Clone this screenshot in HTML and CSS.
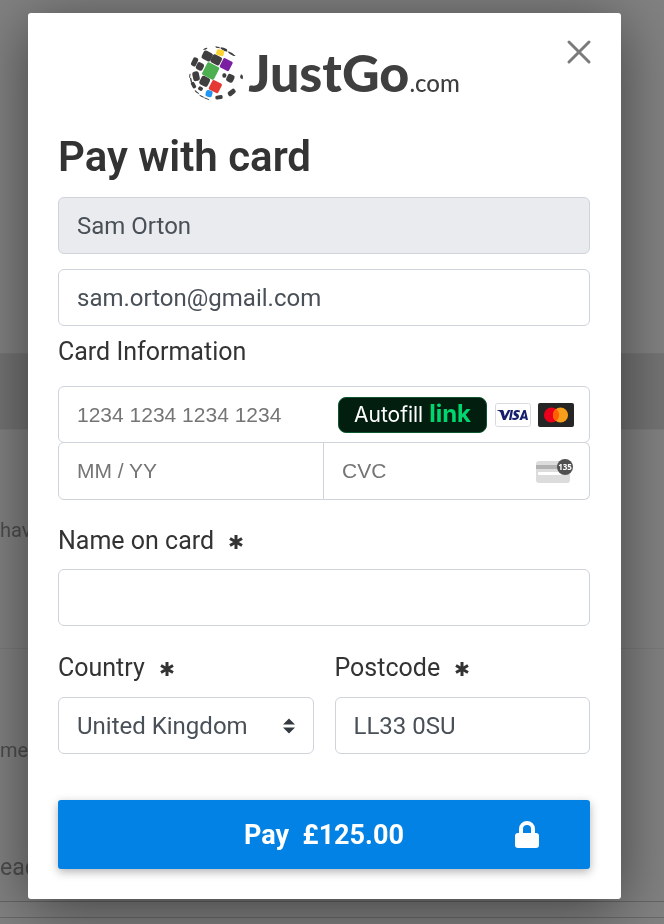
FILE: index.html
```html
<!DOCTYPE html>
<html lang="en">
<head>
<meta charset="utf-8">
<meta name="viewport" content="width=device-width, initial-scale=1">
<title>Pay with card</title>
<link rel="stylesheet" href="styles.css">
</head>
<body>
<div class="page" aria-hidden="true">
  <div class="page-row page-top"></div>
  <div class="page-row page-band"></div>
  <div class="page-row page-first"><span>hav</span></div>
  <div class="page-row page-second"><span>me</span><span class="large">ead</span></div>
  <div class="page-row page-foot"></div>
</div>
<main class="modal" role="dialog" aria-labelledby="title">
  <header class="brand">
    <svg class="globe" viewBox="30 20 168 168" aria-hidden="true">
      <g fill="#3f3f3f">
        <rect x="73" y="39" width="30" height="27" rx="7" transform="rotate(27 87 52)"/>
        <rect x="100" y="51" width="30" height="27" rx="6" transform="rotate(27 115 64)"/>
        <rect x="55" y="73" width="22" height="23" rx="7" transform="rotate(27 66 84)"/>
        <rect x="42" y="57" width="16" height="27" rx="6" transform="rotate(25 50 70)"/>
        <rect x="44" y="99" width="20" height="29" rx="7" transform="rotate(-12 54 113)"/>
        <rect x="66" y="115" width="28" height="28" rx="7" transform="rotate(27 80 129)"/>
        <rect x="146" y="108" width="22" height="24" rx="7" transform="rotate(27 157 120)"/>
        <rect x="133" y="105" width="12" height="13" rx="5"/>
        <rect x="61" y="145" width="14" height="12" rx="4" transform="rotate(30 68 150)"/>
        <rect x="41" y="130" width="11" height="20" rx="4" transform="rotate(-28 47 140)"/>
        <rect x="37" y="118" width="4" height="15" rx="2" transform="rotate(-12 39 125)"/>
        <rect x="34" y="106" width="3" height="12" rx="1" transform="rotate(8 35 112)"/>
        <rect x="149" y="155" width="25" height="15" rx="6" transform="rotate(-38 161 163)"/>
        <rect x="112" y="171" width="22" height="12" rx="5" transform="rotate(-8 123 177)"/>
        <path d="M189 108q5 1 6 7l-1 8q-7-2-8-7zM76 33q6-6 13-4-4 6-13 6zM112 24l12 2 2 4-12-2zM128 27q10 0 19 6l1 7q-8 0-20-9zM151 39q15 5 22 14-7 2-22-10zM51 155l11 9 2 4q-10-4-14-10zM65 169l12 6 1 3q-7-1-13-6zM79 177l14 6 1 3-15-6z"/>
      </g>
      <rect x="115" y="34" width="23" height="18" rx="5" fill="#fdd32f" transform="rotate(15 126 43)"/>
      <rect x="129" y="63" width="31" height="31" rx="4" fill="#7b1fa2" transform="rotate(27 144 79)"/>
      <rect x="78" y="77" width="40" height="42" rx="4" fill="#4caf50" transform="rotate(27 98 98)"/>
      <rect x="96" y="129" width="32" height="32" rx="5" fill="#e53935" transform="rotate(27 112 145)"/>
      <rect x="83" y="156" width="20" height="20" rx="6" fill="#2196f3" transform="rotate(15 93 166)"/>
    </svg>
    <span class="brand-name">JustGo</span><span class="brand-domain">.com</span>
    <button class="close" type="button" aria-label="Close">
      <svg viewBox="0 0 26 26" aria-hidden="true"><path d="M3 3l20 20M23 3L3 23" stroke="#7b7b7b" stroke-width="3" stroke-linecap="round"/></svg>
    </button>
  </header>
  <form>
    <h1 id="title">Pay with card</h1>
    <input class="field" type="text" aria-label="Customer name" value="Sam Orton" readonly>
    <input class="field email" type="email" aria-label="Email" value="sam.orton@gmail.com">
    <label class="label card-label" for="number">Card Information</label>
    <div class="card-number card-part">
      <input id="number" type="text" inputmode="numeric" placeholder="1234 1234 1234 1234">
      <button class="autofill" type="button">Autofill <b>link</b></button>
      <svg class="card-logo" viewBox="0 0 36 24" role="img" aria-label="Visa">
        <rect x=".5" y=".5" width="35" height="23" rx="2" fill="#fff" stroke="#d9dbe0"/>
        <path d="M2 7h5c1 0 1.500.3 1.700 1.300l1 5L13 7h2.500l-5 10H8L5.500 9.500Q5 8 2 7.300zM15.700 7H18l-1.700 10H14zM25 7.500l-.5 2c-2-.8-3.500-.6-3.500.1 0 1 3 1.300 3 3.700 0 3.500-4 4.200-7 3.200l.5-2c2 .8 4 .7 4-.4 0-1.200-3-1.200-3-3.700C18.500 7 22 6.300 25 7.500zM28.500 7h2.200L33 17h-2.200l-.3-1.500h-3L26.800 17h-2.500zM29.600 9.800l-1.400 3.800H30z" fill="#171e6c" fill-rule="evenodd"/>
      </svg>
      <svg class="card-logo" viewBox="0 0 36 24" role="img" aria-label="Mastercard">
        <rect width="36" height="24" rx="2" fill="#252525"/>
        <circle cx="13.500" cy="12" r="7.600" fill="#eb001b"/><circle cx="22.500" cy="12" r="7.600" fill="#f79e1b"/>
        <path d="M18 5.900a7.600 7.600 0 0 1 0 12.200a7.600 7.600 0 0 1 0-12.200z" fill="#ff5f00"/>
      </svg>
    </div>
    <div class="card-details">
      <div class="card-part expiry"><input type="text" aria-label="Expiry date" placeholder="MM / YY"></div>
      <div class="card-part cvc">
        <input type="text" aria-label="Security code" placeholder="CVC">
        <svg class="cvc-icon" viewBox="0 0 38 26" aria-hidden="true">
          <rect y="3" width="34" height="22" rx="3" fill="#dcdcdc"/><path d="M0 7h34v4H0z" fill="#b3b3b3"/><rect x="2" y="14" width="28" height="3" rx="1" fill="#fff"/>
          <circle cx="29" cy="9" r="8" fill="#505050"/>
          <text x="29" y="12" text-anchor="middle" font-family="Open Sans, sans-serif" font-size="8" font-weight="700" fill="#fff">135</text>
        </svg>
      </div>
    </div>
    <label class="label name-label" for="holder">Name on card <svg class="star" viewBox="0 0 16 16" aria-hidden="true"><path d="M8 1v14M2 4.500l12 7M14 4.500l-12 7"/></svg></label>
    <input class="field" id="holder" type="text" required>
    <div class="address">
      <div>
        <label class="label" for="country">Country <svg class="star" viewBox="0 0 16 16" aria-hidden="true"><path d="M8 1v14M2 4.500l12 7M14 4.500l-12 7"/></svg></label>
        <div class="select-box">
          <select class="field" id="country"><option>United Kingdom</option></select>
          <svg class="arrows" viewBox="0 0 12 16" aria-hidden="true"><path d="M6 .5L12 6.500H0zM6 15.500L0 9.500h12z" fill="#343a40"/></svg>
        </div>
      </div>
      <div>
        <label class="label" for="postcode">Postcode <svg class="star" viewBox="0 0 16 16" aria-hidden="true"><path d="M8 1v14M2 4.500l12 7M14 4.500l-12 7"/></svg></label>
        <input class="field" id="postcode" type="text" value="LL33 0SU">
      </div>
    </div>
    <button class="pay" type="button">
      <span>Pay&nbsp; £125.00</span>
      <svg viewBox="0 0 24 28" aria-hidden="true"><path d="M6 13V8a6 6 0 0 1 12 0v5" fill="none" stroke="#fff" stroke-width="4"/><rect y="12" width="24" height="15" rx="3" fill="#fff"/></svg>
    </button>
  </form>
</main>
</body>
</html>
```

FILE: styles.css
```css
* { box-sizing: border-box; }

body {
  margin: 0;
  min-height: 100vh;
  padding: 13px 43px 25px 28px;
  background: #828282;
  color: #333;
  font-family: Roboto, sans-serif;
}

h1 { margin: 0; }
input, select, button { font: inherit; color: inherit; }

.page {
  position: fixed;
  inset: 0;
  overflow: hidden;
  color: #4d4d4d;
  font-size: 20px;
  line-height: 24px;
}
.page-row { border-bottom: 1px solid #777; }
.page-row span { display: block; }
.page-top { height: 354px; }
.page-band { height: 76px; background: #747474; border-color: #7c7c7c; }
.page-first { height: 219px; padding-top: 88px; border-color: #7a7a7a; }
.page-second { height: 253px; padding-top: 89px; border-color: #666; }
.page-second .large { margin-top: 94px; font-size: 23px; }
.page-foot { height: 16px; border-color: #696969; }

.modal {
  position: relative;
  padding: 29px 31px 30px 30px;
  border-radius: 3px;
  background: #fff;
  box-shadow: 0 10px 60px rgba(0, 0, 0, .5);
}

.brand {
  display: flex;
  align-items: baseline;
  justify-content: center;
  height: 91px;
  color: #3f3f3f;
  font-family: Lato, sans-serif;
  line-height: 60px;
}
.globe { width: 56px; height: 56px; margin-right: 4px; align-self: flex-start; margin-top: 3px; }
.brand-name { font-size: 52px; font-weight: 900; }
.brand-domain { font-size: 24px; font-weight: 500; }
.close {
  position: absolute;
  top: 26px;
  right: 29px;
  padding: 0;
  border: 0;
  background: none;
  line-height: 0;
}
.close svg { width: 26px; height: 26px; }

form { display: flex; flex-direction: column; }
h1 { font-size: 42px; line-height: 48px; font-weight: 600; margin-bottom: 16px; }

.field {
  width: 100%;
  height: 57px;
  padding: 0 18px;
  border: 1px solid #ced4da;
  border-radius: 6px;
  background: #fff;
  color: #495057;
  font-size: 24px;
}
.field[readonly] { background: #e9ebef; }
.email { margin-top: 15px; }

.label { display: block; font-size: 25px; line-height: 30px; color: #333; }
.card-label { margin: 11px 0 19px; }
.name-label { margin: 26px 0 13px; }
.star {
  width: 16px;
  height: 16px;
  margin-left: 8px;
  vertical-align: -1px;
  fill: none;
  stroke: #333;
  stroke-width: 3;
}

.card-part {
  display: flex;
  align-items: center;
  height: 57px;
  padding: 0 15px 0 18px;
  border: 1px solid #ced4da;
  border-radius: 6px;
}
.card-part input {
  flex: 1;
  min-width: 0;
  padding: 0;
  border: 0;
  background: none;
  font-family: "Liberation Sans", sans-serif;
  font-size: 21px;
}
.card-part input::placeholder { color: #757575; opacity: 1; }
.autofill {
  height: 36px;
  padding: 0 15px;
  border: 1px solid #0b5730;
  border-radius: 8px;
  background: #011e0f;
  color: #fff;
  font-family: Inter, sans-serif;
  font-size: 21px;
  line-height: 30px;
}
.autofill b { color: #00d66f; font-size: 24px; line-height: 30px; }
.card-logo { width: 36px; height: 24px; margin-left: 8px; }
.card-logo + .card-logo { margin-left: 7px; }
.card-details {
  display: grid;
  grid-template-columns: repeat(2, minmax(0, 1fr));
  margin-top: -1px;
}
.card-details .card-part { height: 58px; }
.expiry { border-radius: 6px 0 0 6px; }
.cvc { border-left: 0; border-radius: 0 6px 6px 0; }
.cvc-icon { width: 38px; height: 26px; }

.address { display: grid; grid-template-columns: 1fr 1fr; gap: 21px; margin-top: 27px; }
.address .label { margin-bottom: 14px; }
.select-box { position: relative; }
.select-box select { appearance: none; }
.arrows { position: absolute; top: 21px; right: 19px; width: 12px; height: 16px; pointer-events: none; }

.pay {
  display: grid;
  grid-template-columns: 1fr auto 1fr;
  align-items: center;
  height: 69px;
  margin-top: 46px;
  padding: 0 51px;
  border: 0;
  border-radius: 3px;
  background: #0282e5;
  color: #fff;
  font-size: 27px;
  font-weight: 700;
  box-shadow: 0 3px 10px rgba(0, 0, 0, .3);
}
.pay span { grid-column: 2; }
.pay svg { width: 24px; height: 28px; justify-self: end; }
```
